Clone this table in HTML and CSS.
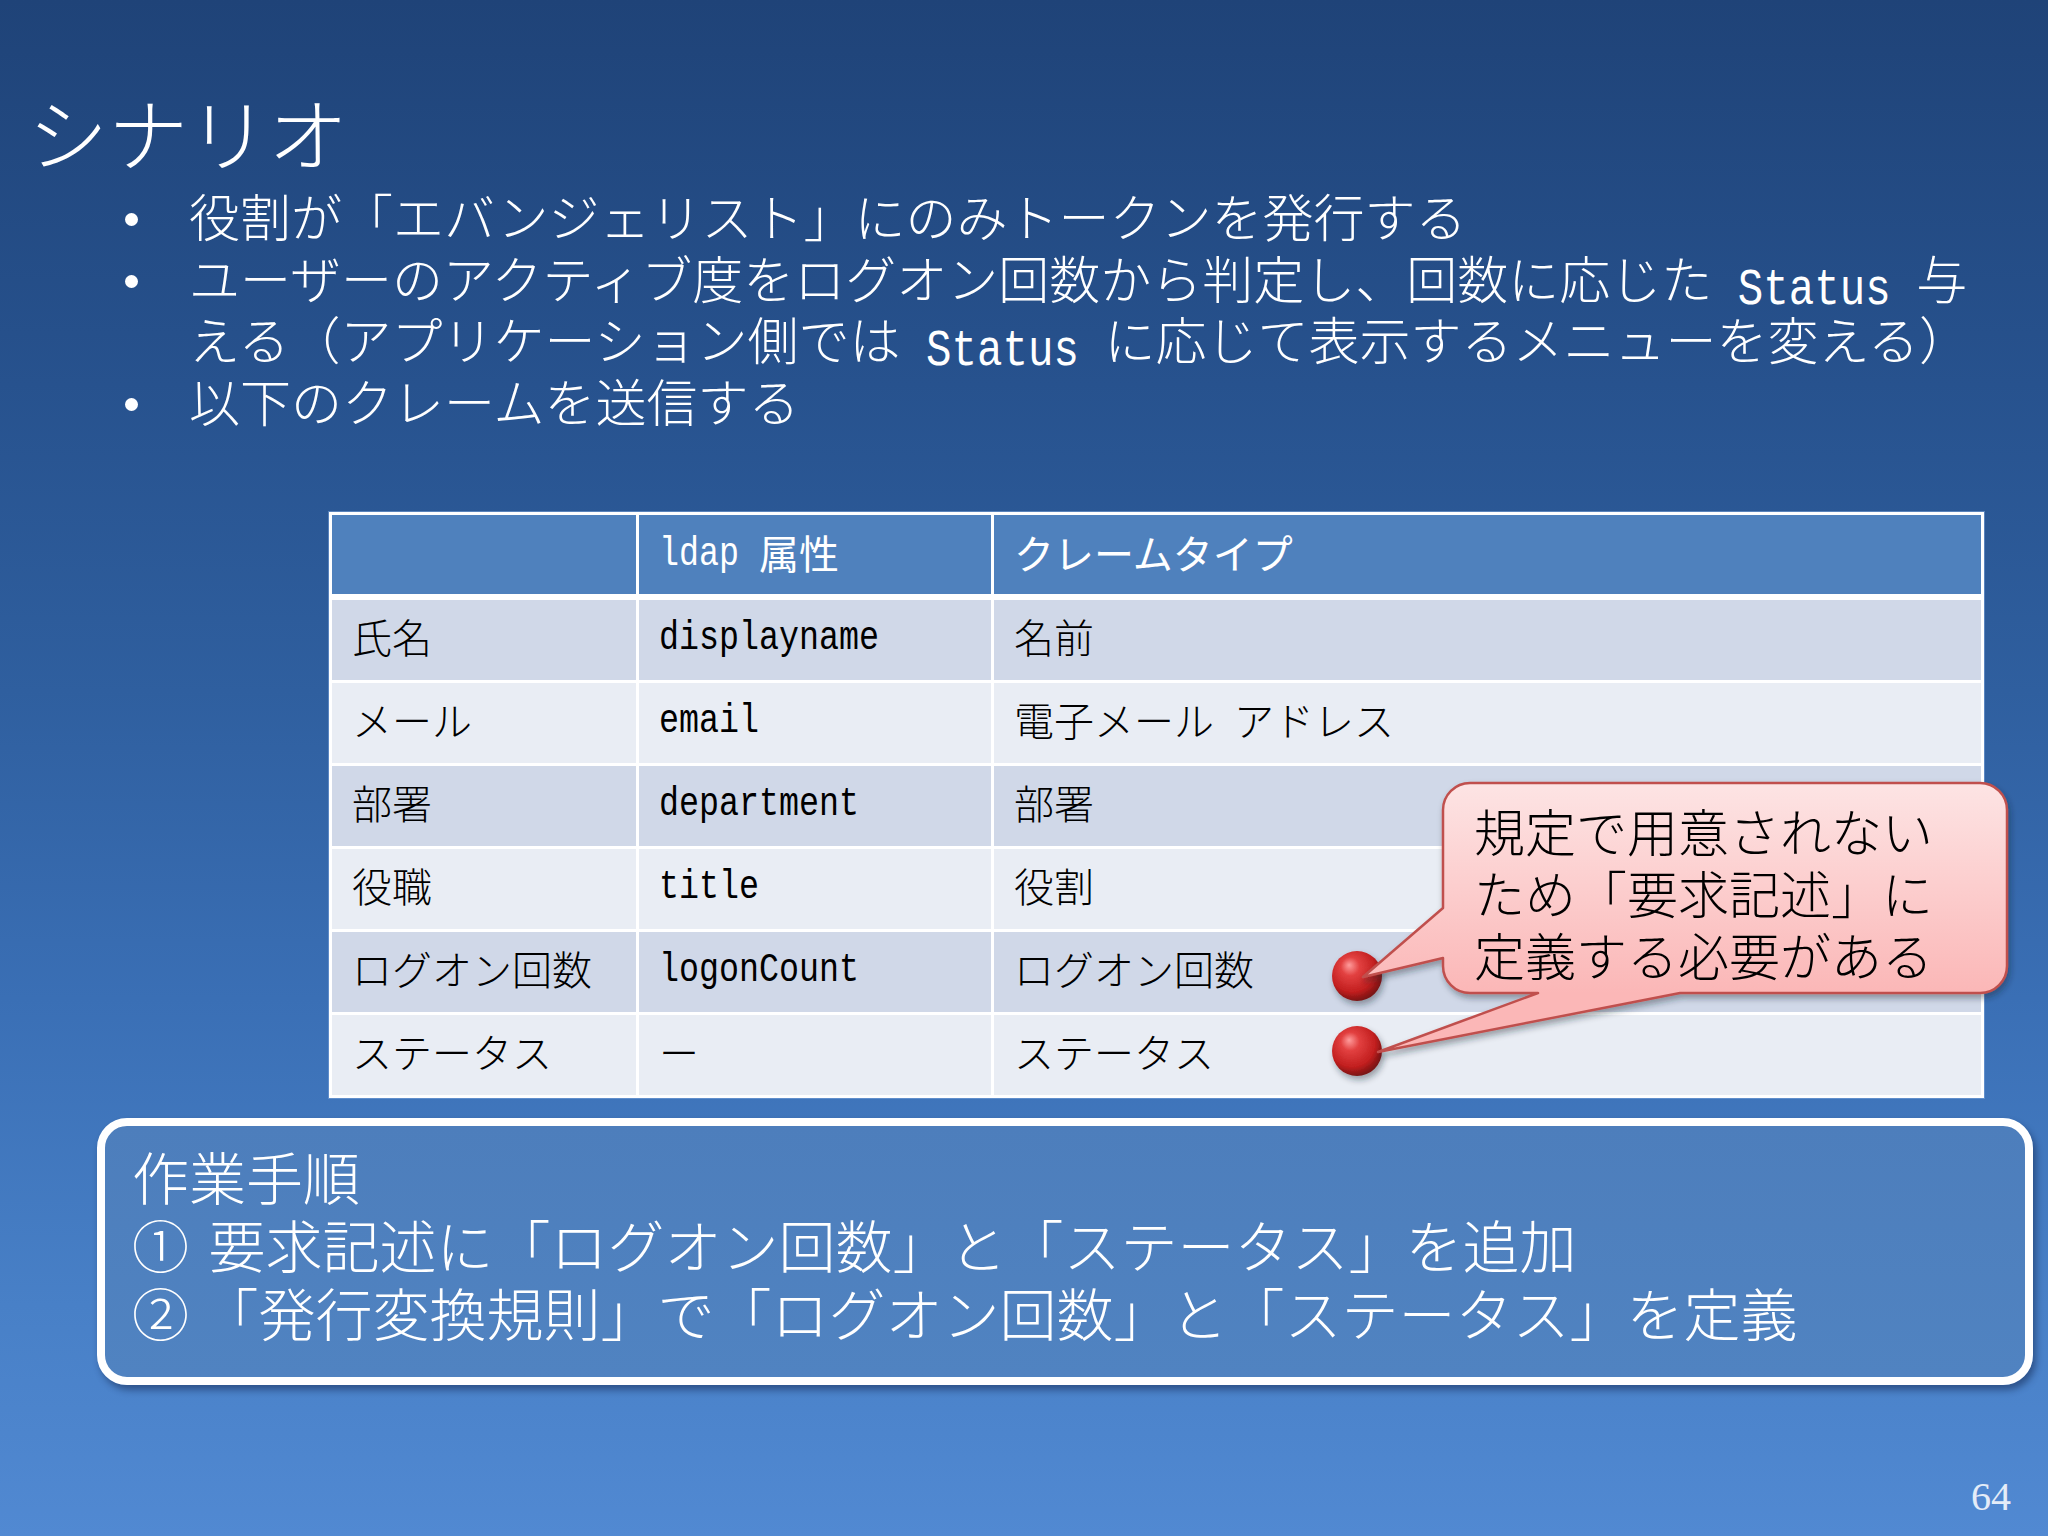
FILE: index.html
```html
<!DOCTYPE html>
<html lang="ja">
<head>
<meta charset="utf-8">
<title>シナリオ</title>
<link rel="stylesheet" href="styles.css">
</head>
<body>
<div class="slide">
  <h1 class="title">シナリオ</h1>
  <ul class="bullets">
    <li><span class="txt">役割が「エバンジェリスト」にのみトークンを発行する</span></li>
    <li><span class="txt">ユーザーのアクティブ度をログオン回数から判定し、回数に応じた<span class="lat"> Status </span>与<br>える（アプリケーション側では<span class="lat"> Status </span>に応じて表示するメニューを変える）</span></li>
    <li><span class="txt">以下のクレームを送信する</span></li>
  </ul>

  <div class="claims">
    <div class="cell head"></div>
    <div class="cell head"><span class="lat">ldap </span>属性</div>
    <div class="cell head">クレームタイプ</div>

    <div class="cell odd">氏名</div>
    <div class="cell odd"><span class="lat">displayname</span></div>
    <div class="cell odd">名前</div>

    <div class="cell even">メール</div>
    <div class="cell even"><span class="lat">email</span></div>
    <div class="cell even">電子メール<span class="lat"> </span>アドレス</div>

    <div class="cell odd">部署</div>
    <div class="cell odd"><span class="lat">department</span></div>
    <div class="cell odd">部署</div>

    <div class="cell even">役職</div>
    <div class="cell even"><span class="lat">title</span></div>
    <div class="cell even">役割</div>

    <div class="cell odd">ログオン回数</div>
    <div class="cell odd"><span class="lat">logonCount</span></div>
    <div class="cell odd">ログオン回数</div>

    <div class="cell even">ステータス</div>
    <div class="cell even">ー</div>
    <div class="cell even">ステータス</div>
  </div>

  <div class="steps">
    <div>作業手順</div>
    <div>①<span class="gap"> </span>要求記述に「ログオン回数」と「ステータス」を追加</div>
    <div>② 「発行変換規則」で「ログオン回数」と「ステータス」を定義</div>
  </div>

  <div class="pageno">64</div>

  <svg class="callout-shape" width="748" height="360" viewBox="0 0 748 360" aria-hidden="true">
    <defs>
      <radialGradient id="pinFill" cx="42%" cy="38%" r="62%" fx="34%" fy="28%">
        <stop offset="0" stop-color="#ff9c9c"/>
        <stop offset="0.3" stop-color="#e24040"/>
        <stop offset="0.75" stop-color="#c21f1f"/>
        <stop offset="1" stop-color="#7a1212"/>
      </radialGradient>
      <linearGradient id="calloutFill" gradientUnits="userSpaceOnUse" x1="0" y1="23" x2="0" y2="233">
        <stop offset="0" stop-color="#fde4e4"/>
        <stop offset="1" stop-color="#fbb7b7"/>
      </linearGradient>
      <filter id="shadow" x="-20%" y="-20%" width="140%" height="150%">
        <feDropShadow dx="2" dy="4" stdDeviation="3" flood-color="#1a2030" flood-opacity="0.4"/>
      </filter>
    </defs>
    <ellipse cx="57" cy="216" rx="25" ry="25" fill="url(#pinFill)" filter="url(#shadow)"/>
    <ellipse cx="57" cy="291" rx="25" ry="25" fill="url(#pinFill)" filter="url(#shadow)"/>
    <path d="M 170 23 H 680 A 27 27 0 0 1 707 50 V 206 A 27 27 0 0 1 680 233 H 380 L 78 292 L 238 233 H 170 A 27 27 0 0 1 143 206 V 198 L 63 217 L 143 148 V 50 A 27 27 0 0 1 170 23 Z"
          fill="url(#calloutFill)" stroke="#c0504d" stroke-width="2.5" stroke-linejoin="round" filter="url(#shadow)"/>
  </svg>
  <div class="callout-text">規定で用意されない<br>ため「要求記述」に<br>定義する必要がある</div>
</div>
</body>
</html>
```

FILE: styles.css
```css
html, body {
  margin: 0;
  padding: 0;
}

body {
  font-family: "Noto Sans CJK JP", "Noto Sans", sans-serif;
  font-weight: 300;
}

.slide {
  position: relative;
  width: 2048px;
  height: 1536px;
  overflow: hidden;
  color: #ffffff;
  background: linear-gradient(180deg, #1f4378 0%, #27528e 25%, #2f5f9f 45%, #3a6fb5 65%, #4880c7 85%, #5189d2 100%);
}

.lat {
  font-family: "Liberation Mono", monospace;
  font-size: 0.8333em;
  line-height: 0.9;
  white-space: pre;
  display: inline-block;
  vertical-align: baseline;
  transform: translateY(0.13em) scaleY(1.2);
  transform-origin: 50% 80%;
}

.gap {
  margin-right: 0.12em;
}

.title {
  margin: 0;
  padding: 82px 0 0 28px;
  font-size: 80px;
  line-height: 96px;
  font-weight: 300;
}

.bullets {
  list-style: none;
  margin: 7px 0 0 0;
  padding: 0;
}

.bullets li {
  display: flex;
  align-items: flex-start;
  font-size: 51px;
  line-height: 61.5px;
}

.bullets li::before {
  content: "";
  flex: none;
  width: 13px;
  height: 13px;
  border-radius: 50%;
  background: #ffffff;
  margin: 28px 51px 0 125px;
}

.bullets .txt {
  flex: 1;
}

.claims {
  display: grid;
  grid-template-columns: 304px 352px 987px;
  grid-template-rows: 82px repeat(6, 80px);
  gap: 3px;
  padding: 3px;
  margin: 81px 0 0 329px;
  width: 1649px;
  background: #ffffff;
  box-shadow: 0 0 0 1px rgba(120, 160, 215, 0.6);
  font-size: 40px;
  line-height: 48px;
  color: #000000;
}

.cell {
  display: flex;
  align-items: center;
  padding: 0 0 9px 20px;
  box-sizing: border-box;
  white-space: nowrap;
}

.cell.head {
  background: #4f81bd;
  color: #ffffff;
  font-weight: 400;
  height: 79px;
  padding-bottom: 6px;
}

.cell.odd {
  background: #d0d8e8;
}

.cell.even {
  background: #e9edf4;
}

.steps {
  margin: 20px 0 0 97px;
  width: 1936px;
  box-sizing: border-box;
  border: 8px solid #ffffff;
  border-radius: 30px;
  padding: 15px 26px 32px 27px;
  background: linear-gradient(180deg, #4d7ebc 0%, #5083c1 100%);
  box-shadow: 3px 5px 7px rgba(10, 25, 60, 0.45);
  font-size: 57px;
  line-height: 68px;
}

.pageno {
  margin-top: 88px;
  padding-right: 37px;
  text-align: right;
  font-family: "Liberation Serif", serif;
  font-size: 40px;
  line-height: 48px;
  color: #e4ecf8;
}

.callout-shape {
  position: absolute;
  left: 1300px;
  top: 760px;
  overflow: visible;
}

.callout-text {
  position: absolute;
  left: 1474px;
  top: 799px;
  font-size: 51px;
  line-height: 62px;
  color: #000000;
  white-space: nowrap;
}
```
